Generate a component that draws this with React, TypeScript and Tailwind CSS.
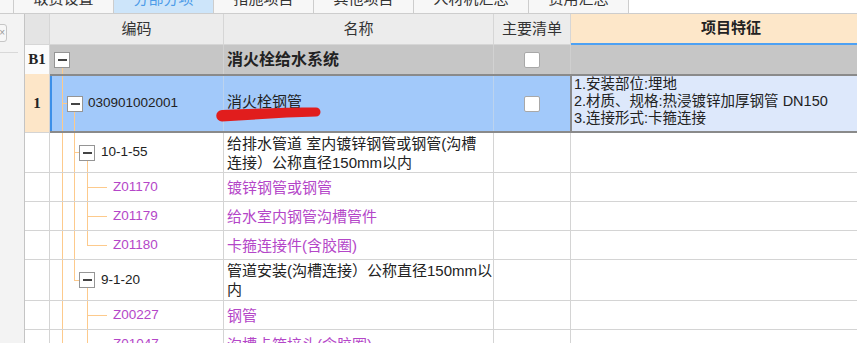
import React from "react";

const LINE = "#fdca8c";
type Part = "full" | "top" | "bottom";

// tree connector lines inside the 编码 cell
const Guides = ({ lines, hor }: { lines: [number, Part][]; hor?: [number, number] }) => (
  <svg className="absolute inset-0 h-full w-full" shapeRendering="crispEdges">
    {lines.map(([x, part]) => (
      <line
        key={x}
        x1={x + 0.5}
        x2={x + 0.5}
        y1={part === "bottom" ? "50%" : "0"}
        y2={part === "top" ? "50%" : "100%"}
        stroke={LINE}
      />
    ))}
    {hor && <line x1={hor[0]} x2={hor[1]} y1="50%" y2="50%" stroke={LINE} />}
  </svg>
);

const Minus = ({ className = "" }: { className?: string }) => (
  <div className={`flex h-4 w-4 shrink-0 items-center justify-center border border-[#959595] bg-white ${className}`}>
    <div className="h-[2px] w-[9px] bg-[#444]" />
  </div>
);

const Check = () => <div className="h-4 w-4 rounded-[2px] border border-[#a8a8a8] bg-white" />;

const Row = ({
  hc,
  lines,
  hor,
  code,
  name,
}: {
  hc: string;
  lines: [number, Part][];
  hor?: [number, number];
  code: React.ReactNode;
  name: React.ReactNode;
}) => (
  <div className={`flex ${hc}`}>
    <div className="w-[25px] shrink-0 border-b border-r border-[#d4d4d4] bg-white" />
    <div className="relative flex w-[174px] shrink-0 items-center border-b border-r border-[#d4d4d4]">
      <Guides lines={lines} hor={hor} />
      <div className="relative flex items-center text-[13.5px]">{code}</div>
    </div>
    <div className="flex w-[270px] shrink-0 items-center border-b border-r border-[#d4d4d4] pl-[3px] text-[15px] leading-[19px]">
      {name}
    </div>
    <div className="w-[77px] shrink-0 border-b border-r border-[#d4d4d4]" />
    <div className="w-[320px] shrink-0 border-b border-[#d4d4d4]" />
  </div>
);

const Leaf = ({ code }: { code: string }) => <span className="ml-[63px] text-[#b446c8]">{code}</span>;

const tabs = [
  { label: "取费设置", w: "w-[100px]" },
  { label: "分部分项", w: "w-[100px]", active: true },
  { label: "措施项目", w: "w-[100px]" },
  { label: "其他项目", w: "w-[100px]" },
  { label: "人材机汇总", w: "w-[115px]" },
  { label: "费用汇总", w: "w-[100px]" },
];

export default function App() {
  return (
    <div className="relative h-[343px] w-[857px] overflow-hidden bg-white font-['Liberation_Sans','Noto_Sans_CJK_SC',sans-serif] text-[#222]">
      {/* Tabs */}
      <div className="flex h-[14px] border-b border-[#cdcdcd]">
        <div className="w-[14px] border-r border-[#cdcdcd] bg-[#f7f7f7]" />
        {tabs.map((t) => (
          <div
            key={t.label}
            className={`flex ${t.w} justify-center overflow-hidden border-r border-[#cdcdcd] ${
              t.active ? "bg-[#cde5fa] text-[#4d9ce8]" : "bg-[#f7f7f7] text-[#333]"
            }`}
          >
            <span className="-mt-[11px] block text-[15px] leading-[20px]">{t.label}</span>
          </div>
        ))}
      </div>

      <div className="flex">
        {/* Left side panel */}
        <div className="flex h-[329px] w-[25px] shrink-0 flex-col border-r border-[#c4c4c4] bg-[#f3f3f3]">
          <div className="-ml-[5px] mt-[10px] flex h-[18px] w-[12px] items-center justify-end rounded-[3px] border border-[#c6c6c6] bg-[#f7f7f7] pr-[1px] text-[10px] leading-none text-[#999]">
            ×
          </div>
          <div className="mt-[10px] h-px w-[18px] bg-[#d8d8d8]" />
        </div>

        {/* Grid */}
        <div className="flex flex-col">
          {/* Header */}
          <div className="flex h-[31px] text-[15px]">
            <div className="w-[25px] shrink-0 border-b border-r border-[#d6d6d6] bg-[#e4e4e4]" />
            <div className="flex w-[174px] shrink-0 items-center justify-center border-b border-r border-[#d6d6d6] bg-[#ececec] text-[#333]">
              编码
            </div>
            <div className="flex w-[270px] shrink-0 items-center justify-center border-b border-r border-[#d6d6d6] bg-[#ececec] text-[#333]">
              名称
            </div>
            <div className="flex w-[77px] shrink-0 items-center justify-center border-b border-r border-[#d6d6d6] bg-[#ececec] text-[#333]">
              主要清单
            </div>
            <div className="flex w-[320px] shrink-0 items-center justify-center border-b-2 border-[#4ea1f3] bg-[#fde7c9] font-bold text-[#222]">
              项目特征
            </div>
          </div>

          {/* B1 */}
          <div className="flex h-[29px]">
            <div className="flex w-[25px] shrink-0 items-center justify-center border-r border-[#d4d4d4] bg-[#fbfbfb] font-['Liberation_Serif',serif] text-[15px] font-bold">
              B1
            </div>
            <div className="relative flex w-[174px] shrink-0 items-center border-r border-[#d2d2d2] bg-[#c6c6c6]">
              <Guides lines={[[12, "bottom"]]} />
              <div className="relative flex items-center">
                <Minus className="ml-[4px]" />
              </div>
            </div>
            <div className="flex w-[270px] shrink-0 items-center border-r border-[#d2d2d2] bg-[#c6c6c6] pl-[3px] text-[16px] font-bold">
              消火栓给水系统
            </div>
            <div className="flex w-[77px] shrink-0 items-center justify-center border-r border-[#cfcfcf] bg-[#c6c6c6]">
              <Check />
            </div>
            <div className="w-[320px] shrink-0 bg-[#c6c6c6]" />
          </div>

          {/* Row 1 (selected) */}
          <div className="flex h-[59px]">
            <div className="flex w-[25px] shrink-0 items-center justify-center border-b border-r border-[#d4d4d4] bg-[#fde6c8] font-['Liberation_Serif',serif] text-[15px] font-bold">
              1
            </div>
            <div className="flex border-y-2 border-[#8a8a8a]">
              <div className="relative flex w-[174px] shrink-0 items-center border-r border-[#bcd3ee] bg-[#a2c9fa] shadow-[inset_2px_0_0_#3c8fe8]">
                <Guides lines={[[12, "full"], [24, "bottom"]]} hor={[12, 17]} />
                <div className="relative flex items-center text-[13.5px]">
                  <Minus className="ml-[17px]" />
                  <span className="ml-[5px]">030901002001</span>
                </div>
              </div>
              <div className="flex w-[270px] shrink-0 items-center border-r border-[#bcd3ee] bg-[#a2c9fa] pb-[3px] pl-[3px] text-[15px]">
                消火栓钢管
              </div>
              <div className="flex w-[76px] shrink-0 items-center justify-center bg-[#a2c9fa]">
                <Check />
              </div>
              <div className="w-[320px] shrink-0 border-l-2 border-[#8a8a8a] bg-[#dde8fb] pl-[2px] text-[14.5px] leading-[17px] text-[#222]">
                <div>1.安装部位:埋地</div>
                <div>2.材质、规格:热浸镀锌加厚钢管 DN150</div>
                <div>3.连接形式:卡箍连接</div>
              </div>
            </div>
          </div>

          <Row
            hc="h-[40px]"
            lines={[[12, "full"], [24, "full"], [37, "bottom"]]}
            hor={[25, 29]}
            code={
              <>
                <Minus className="ml-[29px]" />
                <span className="ml-[6px]">10-1-55</span>
              </>
            }
            name={
              <div className="whitespace-nowrap">
                <div>给排水管道 室内镀锌钢管或钢管(沟槽</div>
                <div>连接）公称直径150mm以内</div>
              </div>
            }
          />
          <Row
            hc="h-[29px]"
            lines={[[12, "full"], [24, "full"], [37, "full"]]}
            hor={[37, 57]}
            code={<Leaf code="Z01170" />}
            name={<span className="text-[#b446c8]">镀锌钢管或钢管</span>}
          />
          <Row
            hc="h-[29px]"
            lines={[[12, "full"], [24, "full"], [37, "full"]]}
            hor={[37, 57]}
            code={<Leaf code="Z01179" />}
            name={<span className="text-[#b446c8]">给水室内钢管沟槽管件</span>}
          />
          <Row
            hc="h-[29px]"
            lines={[[12, "full"], [24, "full"], [37, "top"]]}
            hor={[37, 57]}
            code={<Leaf code="Z01180" />}
            name={<span className="text-[#b446c8]">卡箍连接件(含胶圈)</span>}
          />
          <Row
            hc="h-[41px]"
            lines={[[12, "full"], [24, "top"], [37, "bottom"]]}
            hor={[24, 29]}
            code={
              <>
                <Minus className="ml-[29px]" />
                <span className="ml-[6px]">9-1-20</span>
              </>
            }
            name={
              <div className="whitespace-nowrap">
                <div>管道安装(沟槽连接）公称直径150mm以</div>
                <div>内</div>
              </div>
            }
          />
          <Row
            hc="h-[29px]"
            lines={[[12, "full"], [37, "full"]]}
            hor={[37, 57]}
            code={<Leaf code="Z00227" />}
            name={<span className="text-[#b446c8]">钢管</span>}
          />
          <Row
            hc="h-[29px]"
            lines={[[12, "full"], [37, "full"]]}
            hor={[37, 57]}
            code={<Leaf code="Z01047" />}
            name={<span className="text-[#b446c8]">沟槽卡箍接头(含胶圈)</span>}
          />
        </div>
      </div>

      {/* red marker stroke under 消火栓钢管 */}
      <svg className="pointer-events-none absolute left-0 top-0" width={857} height={343}>
        <path
          d="M222 110 C255 108.5 290 107.5 316 107.5 A4.5 4.5 0 0 1 316 116.5 C290 117 255 119.5 222 121.5 A5.75 5.75 0 0 1 222 110 Z"
          fill="#e11d1d"
        />
      </svg>
    </div>
  );
}
